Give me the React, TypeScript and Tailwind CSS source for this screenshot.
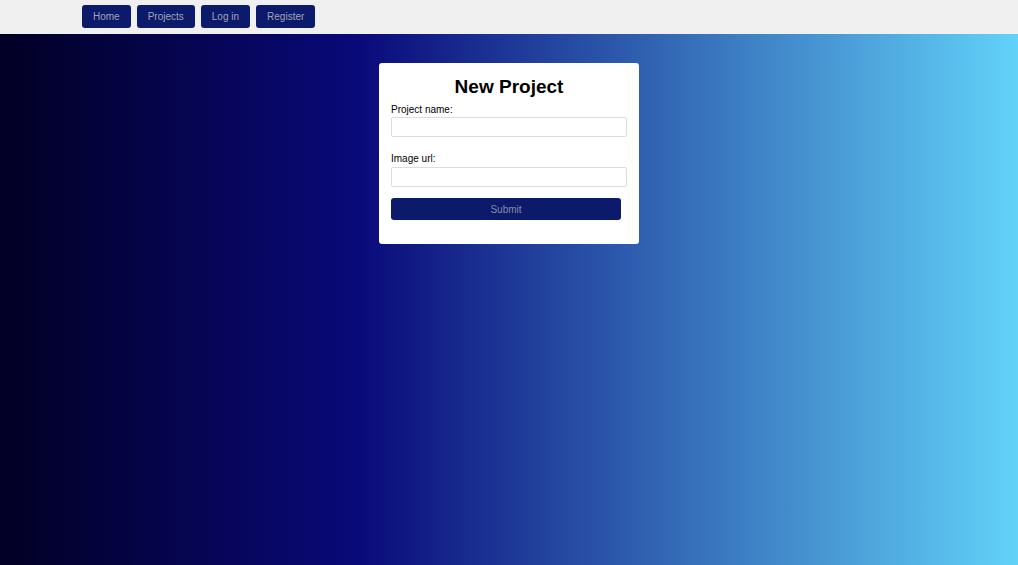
import React from "react";

export default function App() {
  const navBtn =
    "h-[23px] px-[11px] rounded-[3px] bg-[#0b1a6a] text-[#a3a3b8] text-[10px] leading-none flex items-center";
  return (
    <div className="w-full min-h-[565px] flex flex-col font-['Liberation_Sans',Arial,sans-serif]">
      <header className="h-[34px] bg-[#f0f0f0] flex items-start pt-[5px] pl-[82px] gap-[6px]">
        <button className={navBtn}>Home</button>
        <button className={navBtn}>Projects</button>
        <button className={navBtn}>Log in</button>
        <button className={navBtn}>Register</button>
      </header>
      <main className="flex-1 h-[531px] bg-[linear-gradient(90deg,#020024_0%,#090979_35%,#62d2f9_100%)] flex justify-center items-start pt-[29px]">
        <div className="w-[260px] h-[181px] bg-white rounded-[3px] px-[12px] pt-[13px]">
          <h1 className="text-[19px] font-bold text-black text-center leading-[22px]">New Project</h1>
          <label className="block mt-[6px] text-[10px] text-black leading-[12px]">Project name:</label>
          <input className="block mt-[1px] w-[236px] h-[20px] border border-[#dcdcdc] rounded-[2px] outline-none" />
          <label className="block mt-[16px] text-[10px] text-black leading-[12px]">Image url:</label>
          <input className="block mt-[2px] w-[236px] h-[20px] border border-[#dcdcdc] rounded-[2px] outline-none" />
          <button className="mt-[11px] w-[230px] h-[22px] rounded-[3px] bg-[#0b1a6a] text-[#8a8aa8] text-[10px] flex items-center justify-center">
            Submit
          </button>
        </div>
      </main>
    </div>
  );
}
